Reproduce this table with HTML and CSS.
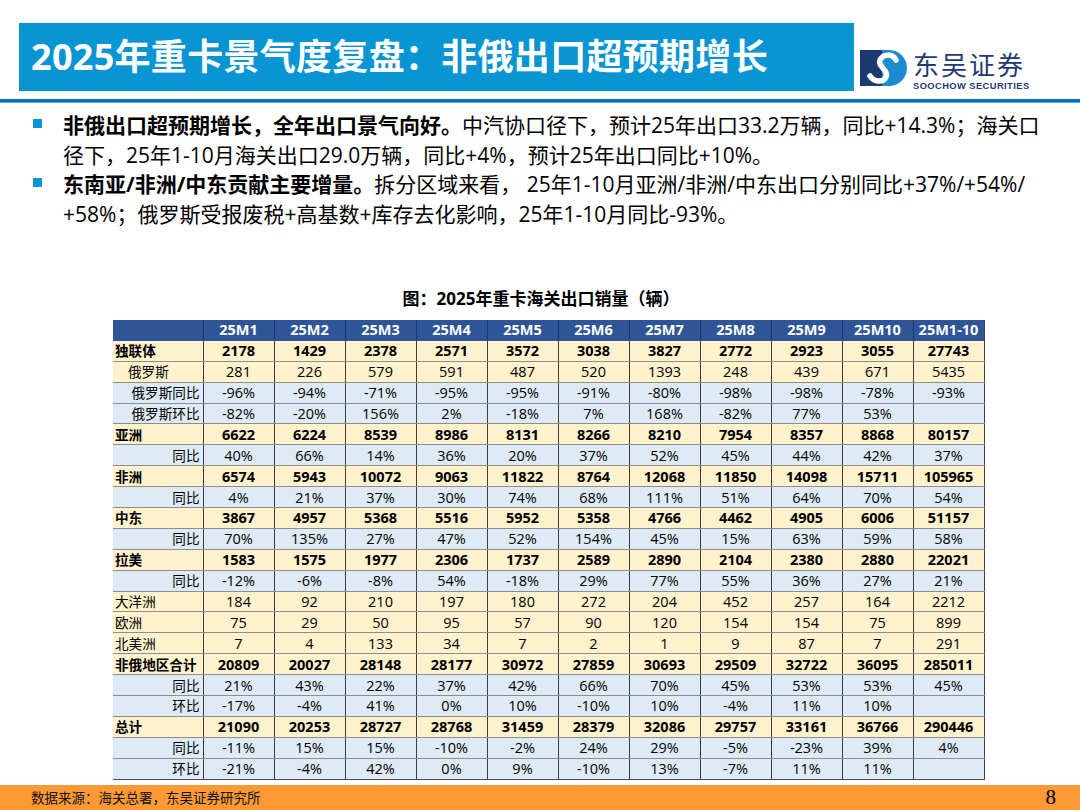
FILE: index.html
```html
<!DOCTYPE html>
<html lang="zh-CN">
<head>
<meta charset="utf-8">
<title>2025年重卡景气度复盘</title>
<link rel="stylesheet" href="styles.css">
</head>
<body>
<div class="page">
  <header class="top">
    <div class="title-bar"><h1>2025年重卡景气度复盘：非俄出口超预期增长</h1></div>
    <div class="logo">
      <svg class="logo-mark" viewBox="0 0 47 36" width="47" height="36" aria-hidden="true">
        <rect x="0" y="0" width="27" height="36" fill="#1c3a72"/>
        <path d="M22 0 H29 A18 18 0 0 1 29 36 H22 Z" fill="#1b8ccf"/>
        <path d="M36 10 C32 3 23 4 20 10 C17 16 29 20 26 27 C23 33 14 32 10 26" fill="none" stroke="#fff" stroke-width="5.5" stroke-linecap="round"/>
      </svg>
      <div class="logo-text">
        <div class="logo-cn">东吴证券</div>
        <div class="logo-en">SOOCHOW SECURITIES</div>
      </div>
    </div>
  </header>
  <div class="rule"></div>

  <ul class="points">
    <li><span class="pt"><b>非俄出口超预期增长，全年出口景气向好。</b>中汽协口径下，预计25年出口33.2万辆，同比+14.3%；海关口<br>径下，25年1-10月海关出口29.0万辆，同比+4%，预计25年出口同比+10%。</span></li>
    <li><span class="pt"><b>东南亚/非洲/中东贡献主要增量。</b>拆分区域来看， 25年1-10月亚洲/非洲/中东出口分别同比+37%/+54%/<br>+58%；俄罗斯受报废税+高基数+库存去化影响，25年1-10月同比-93%。</span></li>
  </ul>

  <section class="figure">
    <div class="caption">图：2025年重卡海关出口销量（辆）</div>
    <table class="data">
      <colgroup>
        <col class="c-label">
        <col><col><col><col><col><col><col><col><col><col><col>
      </colgroup>
      <thead>
        <tr><th></th><th>25M1</th><th>25M2</th><th>25M3</th><th>25M4</th><th>25M5</th><th>25M6</th><th>25M7</th><th>25M8</th><th>25M9</th><th>25M10</th><th>25M1-10</th></tr>
      </thead>
      <tbody>
        <tr class="main"><td class="lb">独联体</td><td>2178</td><td>1429</td><td>2378</td><td>2571</td><td>3572</td><td>3038</td><td>3827</td><td>2772</td><td>2923</td><td>3055</td><td>27743</td></tr>
        <tr class="sub"><td class="lb ind">俄罗斯</td><td>281</td><td>226</td><td>579</td><td>591</td><td>487</td><td>520</td><td>1393</td><td>248</td><td>439</td><td>671</td><td>5435</td></tr>
        <tr class="rate"><td class="lb">俄罗斯同比</td><td>-96%</td><td>-94%</td><td>-71%</td><td>-95%</td><td>-95%</td><td>-91%</td><td>-80%</td><td>-98%</td><td>-98%</td><td>-78%</td><td>-93%</td></tr>
        <tr class="rate"><td class="lb">俄罗斯环比</td><td>-82%</td><td>-20%</td><td>156%</td><td>2%</td><td>-18%</td><td>7%</td><td>168%</td><td>-82%</td><td>77%</td><td>53%</td><td></td></tr>
        <tr class="main"><td class="lb">亚洲</td><td>6622</td><td>6224</td><td>8539</td><td>8986</td><td>8131</td><td>8266</td><td>8210</td><td>7954</td><td>8357</td><td>8868</td><td>80157</td></tr>
        <tr class="rate"><td class="lb">同比</td><td>40%</td><td>66%</td><td>14%</td><td>36%</td><td>20%</td><td>37%</td><td>52%</td><td>45%</td><td>44%</td><td>42%</td><td>37%</td></tr>
        <tr class="main"><td class="lb">非洲</td><td>6574</td><td>5943</td><td>10072</td><td>9063</td><td>11822</td><td>8764</td><td>12068</td><td>11850</td><td>14098</td><td>15711</td><td>105965</td></tr>
        <tr class="rate"><td class="lb">同比</td><td>4%</td><td>21%</td><td>37%</td><td>30%</td><td>74%</td><td>68%</td><td>111%</td><td>51%</td><td>64%</td><td>70%</td><td>54%</td></tr>
        <tr class="main"><td class="lb">中东</td><td>3867</td><td>4957</td><td>5368</td><td>5516</td><td>5952</td><td>5358</td><td>4766</td><td>4462</td><td>4905</td><td>6006</td><td>51157</td></tr>
        <tr class="rate"><td class="lb">同比</td><td>70%</td><td>135%</td><td>27%</td><td>47%</td><td>52%</td><td>154%</td><td>45%</td><td>15%</td><td>63%</td><td>59%</td><td>58%</td></tr>
        <tr class="main"><td class="lb">拉美</td><td>1583</td><td>1575</td><td>1977</td><td>2306</td><td>1737</td><td>2589</td><td>2890</td><td>2104</td><td>2380</td><td>2880</td><td>22021</td></tr>
        <tr class="rate"><td class="lb">同比</td><td>-12%</td><td>-6%</td><td>-8%</td><td>54%</td><td>-18%</td><td>29%</td><td>77%</td><td>55%</td><td>36%</td><td>27%</td><td>21%</td></tr>
        <tr class="sub"><td class="lb">大洋洲</td><td>184</td><td>92</td><td>210</td><td>197</td><td>180</td><td>272</td><td>204</td><td>452</td><td>257</td><td>164</td><td>2212</td></tr>
        <tr class="sub"><td class="lb">欧洲</td><td>75</td><td>29</td><td>50</td><td>95</td><td>57</td><td>90</td><td>120</td><td>154</td><td>154</td><td>75</td><td>899</td></tr>
        <tr class="sub"><td class="lb">北美洲</td><td>7</td><td>4</td><td>133</td><td>34</td><td>7</td><td>2</td><td>1</td><td>9</td><td>87</td><td>7</td><td>291</td></tr>
        <tr class="main"><td class="lb">非俄地区合计</td><td>20809</td><td>20027</td><td>28148</td><td>28177</td><td>30972</td><td>27859</td><td>30693</td><td>29509</td><td>32722</td><td>36095</td><td>285011</td></tr>
        <tr class="rate"><td class="lb">同比</td><td>21%</td><td>43%</td><td>22%</td><td>37%</td><td>42%</td><td>66%</td><td>70%</td><td>45%</td><td>53%</td><td>53%</td><td>45%</td></tr>
        <tr class="rate"><td class="lb">环比</td><td>-17%</td><td>-4%</td><td>41%</td><td>0%</td><td>10%</td><td>-10%</td><td>10%</td><td>-4%</td><td>11%</td><td>10%</td><td></td></tr>
        <tr class="main"><td class="lb">总计</td><td>21090</td><td>20253</td><td>28727</td><td>28768</td><td>31459</td><td>28379</td><td>32086</td><td>29757</td><td>33161</td><td>36766</td><td>290446</td></tr>
        <tr class="rate"><td class="lb">同比</td><td>-11%</td><td>15%</td><td>15%</td><td>-10%</td><td>-2%</td><td>24%</td><td>29%</td><td>-5%</td><td>-23%</td><td>39%</td><td>4%</td></tr>
        <tr class="rate"><td class="lb">环比</td><td>-21%</td><td>-4%</td><td>42%</td><td>0%</td><td>9%</td><td>-10%</td><td>13%</td><td>-7%</td><td>11%</td><td>11%</td><td></td></tr>
      </tbody>
    </table>
  </section>

  <footer class="foot">
    <span class="source">数据来源：海关总署，东吴证券研究所</span>
    <span class="pageno">8</span>
  </footer>
</div>
</body>
</html>
```

FILE: styles.css
```css
html, body {
  margin: 0;
  padding: 0;
}
body {
  width: 1080px;
  height: 810px;
  overflow: hidden;
  background: #ffffff;
  color: #000000;
  font-family: "Open Sans", "Noto Sans CJK SC", sans-serif;
}
.page {
  display: flex;
  flex-direction: column;
  height: 810px;
}

/* header */
.top {
  display: flex;
  align-items: flex-start;
  padding-top: 23px;
  height: 76px;
}
.title-bar {
  margin-left: 19px;
  width: 835px;
  height: 68px;
  background: #0994d4;
  display: flex;
  align-items: center;
}
.title-bar h1 {
  margin: 0;
  padding-left: 12px;
  color: #ffffff;
  font-size: 36px;
  font-weight: 700;
  line-height: 68px;
  letter-spacing: 0.3px;
  white-space: nowrap;
}
.logo {
  display: flex;
  align-items: flex-start;
  gap: 6px;
  margin-left: 6px;
  margin-top: 27px;
}
.logo-mark {
  display: block;
  flex: none;
}
.logo-text {
  display: flex;
  flex-direction: column;
  color: #1e3a74;
  margin-top: -3px;
}
.logo-cn {
  font-family: "Noto Sans CJK SC", sans-serif;
  font-size: 26px;
  font-weight: 400;
  line-height: 34px;
  letter-spacing: 2px;
  white-space: nowrap;
}
.logo-en {
  font-family: "Liberation Sans", "Open Sans", sans-serif;
  font-size: 9.3px;
  font-weight: 700;
  line-height: 10px;
  letter-spacing: 0.45px;
  white-space: nowrap;
}
.rule {
  height: 3px;
  background: #0a6fbf;
  border-bottom: 1px solid #5aa3de;
}

/* bullet points */
.points {
  list-style: none;
  margin: 8px 0 0 0;
  padding: 0 0 0 33px;
}
.points li {
  display: flex;
  align-items: flex-start;
  font-size: 21px;
  line-height: 29.5px;
  white-space: nowrap;
}
.points li::before {
  content: "";
  flex: none;
  width: 9px;
  height: 9px;
  margin-top: 8px;
  margin-right: 21px;
  background: #0994d4;
}
.points b {
  font-weight: 700;
}

/* figure */
.figure {
  margin-top: 60px;
  display: flex;
  flex-direction: column;
}
.caption {
  text-align: center;
  font-size: 17px;
  font-weight: 700;
  line-height: 20px;
  padding-left: 2px;
}
.data {
  margin: 11px 0 0 113px;
  width: 871px;
  table-layout: fixed;
  border-collapse: collapse;
  font-size: 14.5px;
}
.data col {
  width: 71px;
}
.data col.c-label {
  width: 90px;
}
.data th,
.data td {
  height: 19.9px;
  padding: 0;
  line-height: 19px;
  text-align: center;
  white-space: nowrap;
}
.data th {
  background: #2e5597;
  color: #ffffff;
  font-weight: 700;
  border-left: 1px solid #1d3766;
  border-bottom: 1px solid #2e5597;
}
.data th:first-child {
  border-left: none;
}
.data td {
  border-left: 1px solid #3d3d3d;
  border-bottom: 1px solid #8d8d8d;
}
.data td:first-child {
  border-left: none;
}
.data tr > :last-child {
  border-right: 1px solid #3d3d3d;
}
.data tbody tr:last-child td {
  border-bottom: 1px solid #4a4a4a;
}
.data tr.main td {
  background: #fff2cc;
  font-weight: 700;
}
.data tr.sub td {
  background: #fff2cc;
}
.data tr.rate td {
  background: #deebf7;
}
.data td.lb {
  text-align: left;
  padding-left: 2px;
  font-size: 13.6px;
}
.data td.ind {
  padding-left: 15px;
}
.data tr.rate td.lb {
  text-align: right;
  padding-right: 3px;
  padding-left: 0;
}

/* footer */
.foot {
  margin-top: auto;
  height: 25px;
  background: #fd9a35;
  display: flex;
  align-items: center;
  justify-content: space-between;
  padding: 0 24px 0 31px;
}
.source {
  font-family: "Noto Sans CJK SC", sans-serif;
  font-size: 13.5px;
  line-height: 25px;
  color: #111111;
}
.pageno {
  font-family: "Liberation Serif", serif;
  font-size: 21px;
  line-height: 25px;
  color: #000000;
}
```
